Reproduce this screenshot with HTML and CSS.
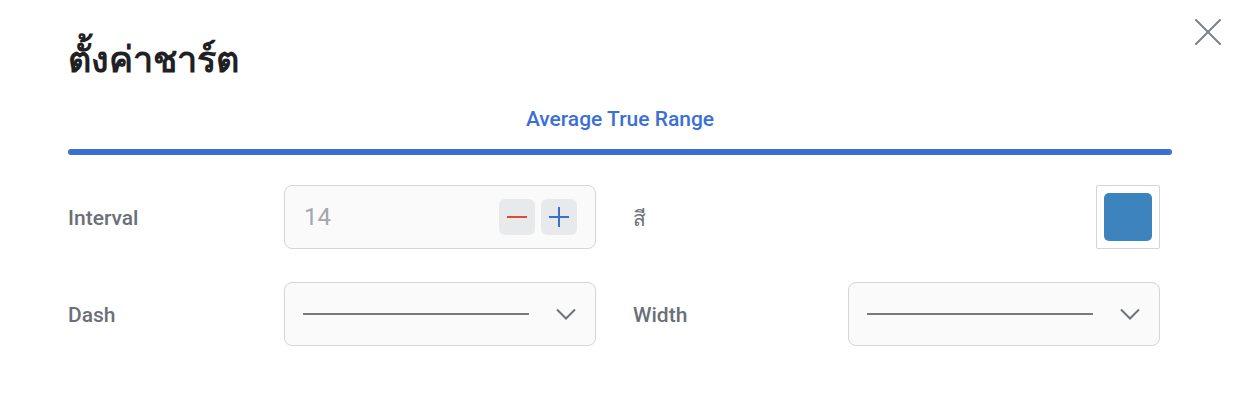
FILE: index.html
```html
<!DOCTYPE html>
<html lang="th">
<head>
<meta charset="utf-8">
<link rel="stylesheet" href="styles.css">
</head>
<body>
<div class="modal">
  <button class="close" aria-label="close">
    <svg width="26" height="26" viewBox="0 0 26 26"><path d="M1 1 L25 25 M25 1 L1 25" stroke="#7d818a" stroke-width="2" fill="none" stroke-linecap="round"/></svg>
  </button>
  <h1 class="title">ตั้งค่าชาร์ต</h1>
  <div class="tabs">
    <div class="tab">Average True Range</div>
    <div class="tab-bar"></div>
  </div>
  <div class="grid">
    <div class="field">
      <div class="label">Interval</div>
      <div class="input">
        <span class="value">14</span>
        <div class="steppers">
          <button class="step"><svg width="20" height="20" viewBox="0 0 20 20"><path d="M0 10 H20" stroke="#d4502f" stroke-width="2"/></svg></button>
          <button class="step"><svg width="20" height="20" viewBox="0 0 20 20"><path d="M0 10 H20 M10 0 V20" stroke="#3a6fd0" stroke-width="2"/></svg></button>
        </div>
      </div>
    </div>
    <div class="field">
      <div class="label">สี</div>
      <div class="swatch"><div class="swatch-fill"></div></div>
    </div>
    <div class="field">
      <div class="label">Dash</div>
      <div class="input select">
        <div class="line"></div>
        <svg class="chev" width="22" height="12" viewBox="0 0 22 12"><path d="M2 1.5 L11 10.5 L20 1.5" stroke="#6e737c" stroke-width="2" fill="none"/></svg>
      </div>
    </div>
    <div class="field">
      <div class="label">Width</div>
      <div class="input select">
        <div class="line"></div>
        <svg class="chev" width="22" height="12" viewBox="0 0 22 12"><path d="M2 1.5 L11 10.5 L20 1.5" stroke="#6e737c" stroke-width="2" fill="none"/></svg>
      </div>
    </div>
  </div>
</div>
</body>
</html>
```

FILE: styles.css
```css
html, body {
  margin: 0;
  padding: 0;
  background: #ffffff;
}
body {
  font-family: Roboto, "Noto Sans", "DejaVu Sans", sans-serif;
  width: 1238px;
  height: 406px;
  overflow: hidden;
}
.modal {
  position: relative;
  padding: 38px 66px 0 68px;
}
.close {
  position: absolute;
  top: 19px;
  right: 17px;
  width: 26px;
  height: 26px;
  padding: 0;
  border: 0;
  background: transparent;
  display: flex;
}
.title {
  margin: 0;
  font-size: 36px;
  line-height: 44px;
  font-weight: 700;
  color: #1f2124;
}
.tabs {
  margin-top: 24px;
  display: flex;
  flex-direction: column;
  align-items: center;
}
.tab {
  font-size: 21px;
  line-height: 26px;
  font-weight: 500;
  color: #3b6fd6;
  padding-bottom: 17px;
}
.tab-bar {
  align-self: stretch;
  height: 6px;
  border-radius: 3px;
  background: #3b6fd6;
}
.grid {
  margin-top: 30px;
  display: grid;
  grid-template-columns: 528px 527px;
  column-gap: 37px;
  row-gap: 33px;
}
.field {
  display: flex;
  align-items: center;
  justify-content: space-between;
  height: 64px;
}
.label {
  font-size: 21px;
  font-weight: 500;
  color: #6b6f78;
  padding-top: 2px;
}
.input {
  box-sizing: border-box;
  width: 312px;
  height: 64px;
  border: 1px solid #d3d5d9;
  border-radius: 8px;
  background: #fafafa;
  display: flex;
  align-items: center;
  justify-content: space-between;
  padding: 0 18px 0 19px;
}
.value {
  font-size: 24px;
  color: #a2a6ad;
}
.steppers {
  display: flex;
  gap: 6px;
}
.step {
  width: 36px;
  height: 36px;
  border: 0;
  padding: 0;
  border-radius: 6px;
  background: #e8e9eb;
  display: flex;
  align-items: center;
  justify-content: center;
}
.swatch {
  box-sizing: border-box;
  width: 64px;
  height: 64px;
  border: 1px solid #d3d5d9;
  border-radius: 2px;
  display: flex;
  align-items: center;
  justify-content: center;
}
.swatch-fill {
  width: 48px;
  height: 48px;
  border-radius: 5px;
  background: #3d84bf;
}
.select {
  padding: 0 18px 0 18px;
}
.line {
  width: 226px;
  height: 2px;
  background: #7a7a7a;
}
.chev {
  display: block;
}
```
